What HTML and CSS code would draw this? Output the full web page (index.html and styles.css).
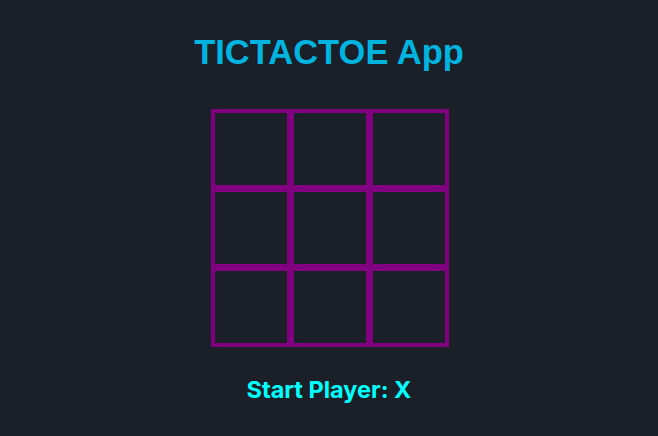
FILE: index.html
```html
<!DOCTYPE html>
<html>
<head>
<meta charset="utf-8">
<link rel="stylesheet" href="styles.css">
</head>
<body>
<div class="app">
  <h1 class="title">TICTACTOE App</h1>
  <div class="board">
    <div class="row"><div class="square"></div><div class="square"></div><div class="square"></div></div>
    <div class="row"><div class="square"></div><div class="square"></div><div class="square"></div></div>
    <div class="row"><div class="square"></div><div class="square"></div><div class="square"></div></div>
  </div>
  <p class="status">Start Player: X</p>
</div>
</body>
</html>
```
FILE: styles.css
```css
html, body {
  margin: 0;
  padding: 0;
  background: #1b1f27;
  height: 100%;
}
.app {
  display: flex;
  flex-direction: column;
  align-items: center;
  font-family: "Liberation Sans", Arial, sans-serif;
}
.title {
  margin: 32px 0 0 0;
  font-size: 34.5px;
  line-height: 40px;
  font-weight: bold;
  color: #00b4e0;
}
.board {
  margin-top: 37px;
  display: flex;
  flex-direction: column;
}
.row {
  display: flex;
  margin-bottom: -1px;
}
.square {
  box-sizing: border-box;
  width: 80px;
  height: 80px;
  border: 4px solid #800080;
  margin-right: -1px;
}
.status {
  margin: 30px 0 0 0;
  font-family: Inter, sans-serif;
  font-size: 23.5px;
  line-height: 28px;
  font-weight: bold;
  color: #00ffff;
}
```
